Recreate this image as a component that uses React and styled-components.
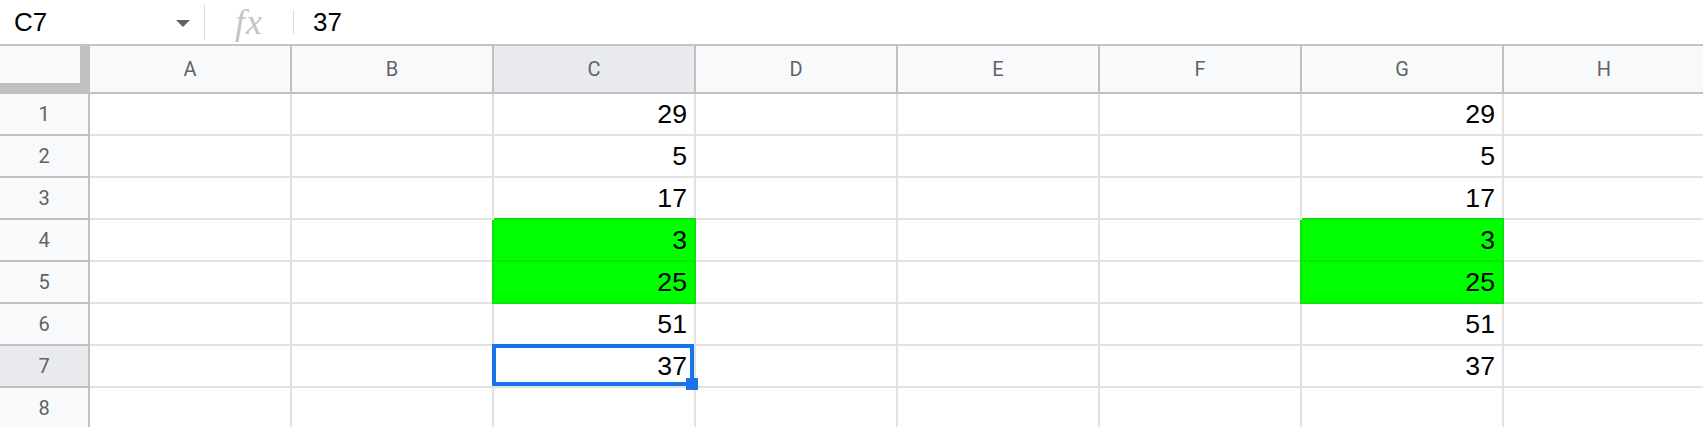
import styled, { createGlobalStyle } from "styled-components";

const GlobalStyle = createGlobalStyle`
  html, body {
    margin: 0;
    padding: 0;
    background: #ffffff;
    overflow: hidden;
  }
  body {
    font-family: "Liberation Sans", Arial, sans-serif;
  }
`;

const columns = ["A", "B", "C", "D", "E", "F", "G", "H"];
const values = [29, 5, 17, 3, 25, 51, 37];
const greenRows = [4, 5];
const selected = { col: "C", row: 7 };

const Page = styled.div`
  width: 1703px;
  height: 427px;
  overflow: hidden;
`;

const FormulaBar = styled.div`
  height: 44px;
  display: flex;
  align-items: center;
  border-bottom: 2px solid #c4c4c4;
`;

const NameBox = styled.div`
  width: 204px;
  height: 100%;
  display: flex;
  align-items: center;
  justify-content: space-between;
  padding: 0 14px 0 14px;
  box-sizing: border-box;
  font-size: 26px;
  color: #000;
`;

const Caret = styled.span`
  width: 0;
  height: 0;
  border-left: 7px solid transparent;
  border-right: 7px solid transparent;
  border-top: 7px solid #5f6368;
  margin-top: 2px;
`;

const Divider = styled.div`
  width: 1px;
  height: ${(p) => p.$h}px;
  background: #dadce0;
`;

const Fx = styled.div`
  width: 88px;
  text-align: center;
  font-family: "Liberation Serif", "Times New Roman", serif;
  font-style: italic;
  font-size: 36px;
  line-height: 1;
  color: #c4c4c4;
  letter-spacing: 1px;
`;

const FormulaValue = styled.div`
  padding-left: 19px;
  font-size: 26px;
  color: #000;
`;

const Grid = styled.div`
  display: grid;
  grid-template-columns: 90px repeat(8, 202px);
  grid-template-rows: 48px repeat(8, 42px);
`;

const Corner = styled.div`
  box-sizing: border-box;
  background: #f8f9fa;
  border-right: 10px solid #c0c0c0;
  border-bottom: 11px solid #c0c0c0;
`;

const HeaderCell = styled.div`
  box-sizing: border-box;
  display: flex;
  align-items: center;
  justify-content: center;
  background: ${(p) => (p.$active ? "#e8eaed" : "#f8f9fa")};
  border-right: 2px solid #c0c0c0;
  border-bottom: 2px solid #c0c0c0;
  font-family: Roboto, "Liberation Sans", sans-serif;
  font-size: 20px;
  color: #5f6368;
`;

const Cell = styled.div`
  position: relative;
  box-sizing: border-box;
  display: flex;
  align-items: flex-end;
  justify-content: flex-end;
  padding: 0 7px 4px 0;
  background: ${(p) => (p.$fill ? "#00ff00" : "#ffffff")};
  border-right: 2px solid ${(p) => (p.$fill ? "#0be30b" : "#e2e2e2")};
  border-bottom: 2px solid ${(p) => (p.$fill ? "#0be30b" : "#e2e2e2")};
  box-shadow: ${(p) => (p.$fill ? "-2px 0 0 #0be30b, 0 -2px 0 #0be30b" : "none")};
  font-family: "Liberation Sans", Arial, sans-serif;
  font-size: 26.67px;
  color: #000;
`;

const Selection = styled.div`
  position: absolute;
  z-index: 2;
  top: -2px;
  left: -2px;
  right: 0;
  bottom: 0;
  border: 4px solid #1a73e8;
  pointer-events: none;

  &::after {
    content: "";
    position: absolute;
    right: -8px;
    bottom: -8px;
    width: 12px;
    height: 12px;
    background: #1a73e8;
  }
`;

export default function App() {
  const rows = [1, 2, 3, 4, 5, 6, 7, 8];

  return (
    <Page>
      <GlobalStyle />
      <FormulaBar>
        <NameBox>
          <span>C7</span>
          <Caret />
        </NameBox>
        <Divider $h={36} />
        <Fx>fx</Fx>
        <Divider $h={24} />
        <FormulaValue>37</FormulaValue>
      </FormulaBar>
      <Grid>
        <Corner />
        {columns.map((c) => (
          <HeaderCell key={c} $active={c === selected.col}>
            {c}
          </HeaderCell>
        ))}
        {rows.map((r) => (
          <RowCells key={r} row={r} />
        ))}
      </Grid>
    </Page>
  );
}

function RowCells({ row }) {
  return (
    <>
      <HeaderCell $active={row === selected.row}>{row}</HeaderCell>
      {columns.map((c) => {
        const hasValue = (c === "C" || c === "G") && row <= values.length;
        const fill = hasValue && greenRows.includes(row);
        const isSelected = c === selected.col && row === selected.row;
        return (
          <Cell key={c} $fill={fill}>
            {hasValue ? values[row - 1] : null}
            {isSelected && <Selection />}
          </Cell>
        );
      })}
    </>
  );
}
